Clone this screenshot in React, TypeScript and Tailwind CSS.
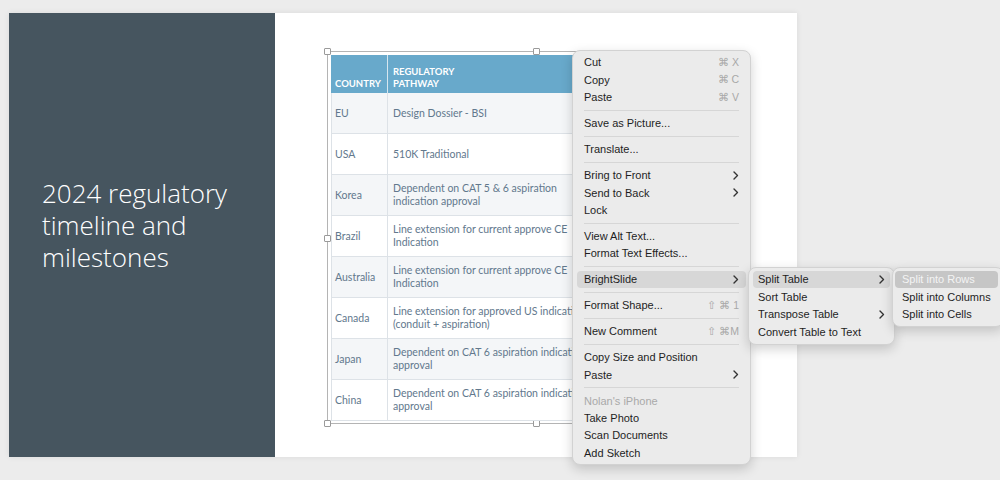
import React from "react";

const rows: [string, string][] = [
  ["EU", "Design Dossier - BSI"],
  ["USA", "510K Traditional"],
  ["Korea", "Dependent on CAT 5 & 6 aspiration indication approval"],
  ["Brazil", "Line extension for current approve CE Indication"],
  ["Australia", "Line extension for current approve CE Indication"],
  ["Canada", "Line extension for approved US indication (conduit + aspiration)"],
  ["Japan", "Dependent on CAT 6 aspiration indication approval"],
  ["China", "Dependent on CAT 6 aspiration indication approval"],
];

type Item =
  | { sep: true }
  | { label: string; shortcut?: string; sub?: boolean; hl?: boolean; dim?: boolean };

const menu: Item[] = [
  { label: "Cut", shortcut: "⌘ X" },
  { label: "Copy", shortcut: "⌘ C" },
  { label: "Paste", shortcut: "⌘ V" },
  { sep: true },
  { label: "Save as Picture..." },
  { sep: true },
  { label: "Translate..." },
  { sep: true },
  { label: "Bring to Front", sub: true },
  { label: "Send to Back", sub: true },
  { label: "Lock" },
  { sep: true },
  { label: "View Alt Text..." },
  { label: "Format Text Effects..." },
  { sep: true },
  { label: "BrightSlide", sub: true, hl: true },
  { sep: true },
  { label: "Format Shape...", shortcut: "⇧ ⌘ 1" },
  { sep: true },
  { label: "New Comment", shortcut: "⇧ ⌘M" },
  { sep: true },
  { label: "Copy Size and Position" },
  { label: "Paste", sub: true },
  { sep: true },
  { label: "Nolan's iPhone", dim: true },
  { label: "Take Photo" },
  { label: "Scan Documents" },
  { label: "Add Sketch" },
];

const Chevron = () => (
  <svg width="6" height="9" viewBox="0 0 6 9" className="shrink-0">
    <path d="M1 1l3.5 3.5L1 8" fill="none" stroke="#333" strokeWidth="1.4" strokeLinecap="round" strokeLinejoin="round" />
  </svg>
);

const Handle = ({ cls }: { cls: string }) => (
  <div className={`absolute w-[7px] h-[7px] bg-white border border-[#9a9a9a] rounded-[1px] ${cls}`} />
);

const font = { fontFamily: "'Liberation Sans', Arial, sans-serif" };

export default function App() {
  return (
    <div className="relative w-[1000px] h-[480px] bg-[#ececec] overflow-hidden">
      {/* slide */}
      <div className="absolute left-[9px] top-[13px] w-[788px] h-[444px] flex shadow-[0_0_6px_rgba(0,0,0,0.08)]">
        <div className="w-[266px] h-full bg-[#46555f] flex items-center">
          <div
            className="ml-[33px] text-white text-[26px] leading-[32px] font-light mt-[-20px]"
            style={{ fontFamily: "'Open Sans', 'Liberation Sans', sans-serif" }}
          >
            <div>2024 regulatory</div>
            <div>timeline and</div>
            <div>milestones</div>
          </div>
        </div>
        <div className="flex-1 bg-white relative">
          <div className="relative ml-[52px] mt-[38px] w-[418px] h-[373px] border border-[#b4b4b4]">
            <Handle cls="-left-[4px] -top-[4px]" />
            <Handle cls="left-[205px] -top-[4px]" />
            <Handle cls="-left-[4px] top-[183px]" />
            <Handle cls="-left-[4px] -bottom-[4px]" />
            <Handle cls="left-[205px] -bottom-[4px]" />
            <div className="absolute left-[3px] top-[3px] w-[414px]" style={{ fontFamily: "'Lato', 'Open Sans', sans-serif" }}>
              <div className="flex h-[38px] bg-[#68a9cb] text-white font-bold text-[9.5px] leading-[12px] uppercase">
                <div className="w-[57px] border-r border-[#d6e6ef] flex items-end pl-[4px] pb-[3px]">Country</div>
                <div className="flex-1 flex flex-col justify-end pl-[5px] pb-[3px]">
                  <div>Regulatory</div>
                  <div>Pathway</div>
                </div>
              </div>
              {rows.map(([c, p], i) => (
                <div
                  key={i}
                  className={`flex h-[41px] border-b border-[#dde2e7] border-l text-[10.5px] leading-[13px] text-[#62788d] ${
                    i % 2 === 0 ? "bg-[#f4f6f8]" : "bg-white"
                  }`}
                >
                  <div className="w-[56px] border-r border-[#dde2e7] flex items-center pl-[3px]">{c}</div>
                  <div className="flex-1 flex items-center pl-[5px] pr-[4px]">
                    <span className="w-[200px]">{p}</span>
                  </div>
                </div>
              ))}
            </div>
          </div>
        </div>
      </div>

      {/* context menu */}
      <div
        className="absolute left-[572px] top-[50px] w-[179px] h-[415px] bg-[#ebebeb] rounded-[8px] border border-[#d2d2d2] shadow-[0_4px_12px_rgba(0,0,0,0.18)] px-[4px] py-[3px] text-[11px] text-[#1e1e1e]"
        style={font}
      >
        {menu.map((m, i) =>
          "sep" in m ? (
            <div key={i} className="h-[8.6px] flex items-center px-[7px]">
              <div className="h-px w-full bg-[#d6d6d6]" />
            </div>
          ) : (
            <div
              key={i}
              className={`h-[17.4px] flex items-center px-[7px] rounded-[4px] whitespace-nowrap ${m.hl ? "bg-[#d7d7d7]" : ""} ${
                m.dim ? "text-[#a9a9a9]" : ""
              }`}
            >
              <span className="flex-1">{m.label}</span>
              {m.shortcut && <span className="text-[#a8a8a8] text-[10.5px]">{m.shortcut}</span>}
              {m.sub && <Chevron />}
            </div>
          )
        )}
      </div>

      {/* submenu 1 */}
      <div
        className="absolute left-[748px] top-[267px] w-[147px] bg-[#ebebeb] rounded-[8px] border border-[#d2d2d2] shadow-[0_4px_12px_rgba(0,0,0,0.18)] px-[4px] py-[3px] text-[11px] text-[#1e1e1e]"
        style={font}
      >
        {[
          { l: "Split Table", s: true, h: true },
          { l: "Sort Table" },
          { l: "Transpose Table", s: true },
          { l: "Convert Table to Text" },
        ].map((m, i) => (
          <div key={i} className={`h-[17.4px] flex items-center px-[5px] rounded-[4px] whitespace-nowrap ${m.h ? "bg-[#d7d7d7]" : ""}`}>
            <span className="flex-1">{m.l}</span>
            {m.s && <Chevron />}
          </div>
        ))}
      </div>

      {/* submenu 2 */}
      <div
        className="absolute left-[892px] top-[267px] w-[112px] bg-[#ebebeb] rounded-[8px] border border-[#d2d2d2] shadow-[0_4px_12px_rgba(0,0,0,0.18)] pl-[2px] pr-[5px] py-[3px] text-[11px] text-[#1e1e1e]"
        style={font}
      >
        {[
          { l: "Split into Rows", h: true },
          { l: "Split into Columns" },
          { l: "Split into Cells" },
        ].map((m, i) => (
          <div
            key={i}
            className={`h-[17.4px] flex items-center px-[7px] rounded-[4px] whitespace-nowrap ${m.h ? "bg-[#c6c6c6] text-[#f4f4f4]" : ""}`}
          >
            {m.l}
          </div>
        ))}
      </div>
    </div>
  );
}
